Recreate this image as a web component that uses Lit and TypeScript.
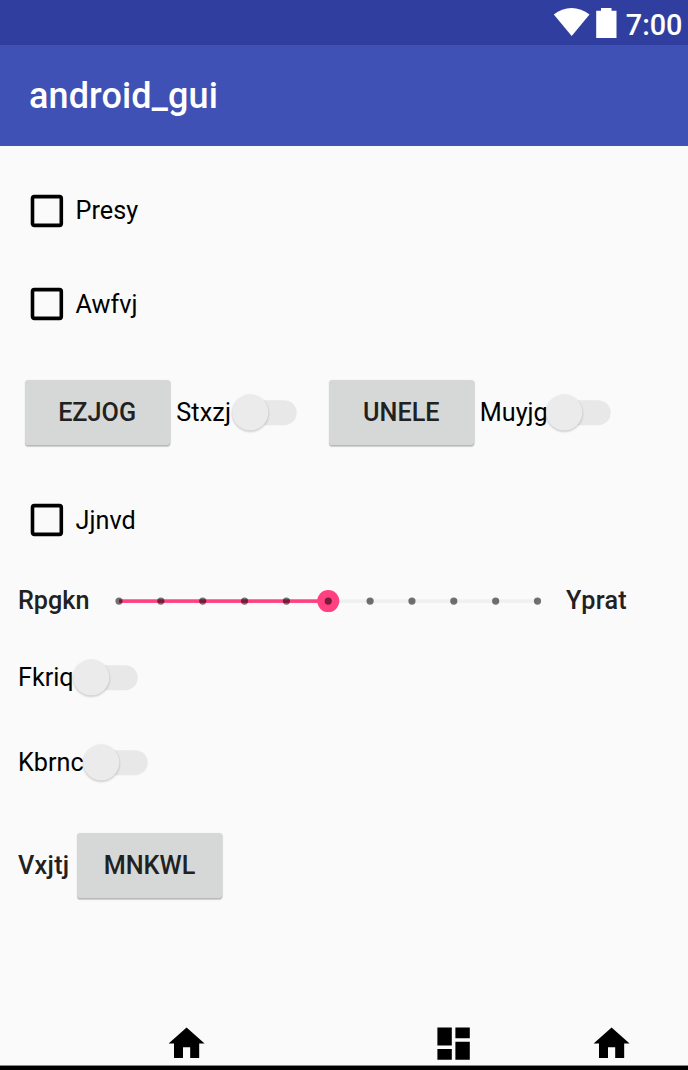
import { LitElement, html, css, svg } from "lit";
import { customElement, property } from "lit/decorators.js";

const HOME = "M10 20v-6h4v6h5v-8h3L12 3 2 12h3v8z";
const DASHBOARD =
  "M3 13h8V3H3v10zm0 8h8v-6H3v6zm10 0h8V11h-8v10zm0-18v6h8V3h-8z";

@customElement("check-row")
class CheckRow extends LitElement {
  @property() label = "";
  static styles = css`
    :host { display: flex; align-items: center; padding-left: 30px; }
    svg { display: block; flex: none; margin-right: 11.6px; }
    .text { color: #000; padding-top: 1px; }
  `;
  render() {
    return html`<svg width="34" height="34" viewBox="0 0 34 34">
        <rect x="2.5" y="2.6" width="28.8" height="28.8" rx="1.8" fill="none" stroke="#000" stroke-width="3.6"></rect>
      </svg>
      <span class="text">${this.label}</span>`;
  }
}

@customElement("toggle-switch")
class ToggleSwitch extends LitElement {
  @property() label = "";
  static styles = css`
    :host { display: flex; align-items: center; color: #000; }
    .text { flex: 1; min-width: 0; white-space: nowrap; }
    svg { display: block; flex: none; overflow: visible; }
    .thumb { filter: drop-shadow(0 1.6px 1px rgba(0, 0, 0, 0.24)); }
  `;
  render() {
    return html`<span class="text">${this.label}</span>
      <svg width="65" height="38" viewBox="0 0 65 38">
        <rect x="18" y="6.2" width="46.7" height="25" rx="12.5" fill="#e8e8e8"></rect>
        <circle class="thumb" cx="18.3" cy="18.6" r="18" fill="#ebebeb"></circle>
      </svg>`;
  }
}

@customElement("step-slider")
class StepSlider extends LitElement {
  @property({ type: Number }) value = 5;
  static styles = css`
    :host { display: block; }
    svg { display: block; }
  `;
  render() {
    const step = 41.85;
    const x = (i: number) => 12 + i * step;
    return html`<svg width="443" height="24" viewBox="0 0 443 24">
      <rect x="12" y="10.3" width="418.5" height="3.6" fill="#f0f0f0"></rect>
      <rect x="12" y="10.3" width=${this.value * step} height="3.6" fill="#ff4081"></rect>
      <circle cx=${x(this.value)} cy="12.1" r="11" fill="#ff4081"></circle>
      ${Array.from({ length: 11 }, (_, i) =>
        svg`<circle cx=${x(i)} cy="12.1" r="3.6" fill="#000" fill-opacity="0.55"></circle>`
      )}
    </svg>`;
  }
}

@customElement("app-root")
class AppRoot extends LitElement {
  static styles = css`
    :host {
      display: flex; flex-direction: column; width: 688px; height: 1070px;
      overflow: hidden; background: #fafafa;
      font: 400 25.2px/30px Roboto, sans-serif; color: #212121;
    }
    .status {
      flex: none; height: 45px; background: #303f9f; color: #fff;
      display: flex; align-items: center; justify-content: flex-end;
      box-sizing: border-box; padding: 5px 5.5px 0 0;
      font-size: 28.8px; font-weight: 500;
    }
    .status svg { display: block; height: 45px; width: 72.5px; margin-top: -5px; }
    .bar {
      flex: none; height: 101px; background: #3f51b5; color: #fff;
      display: flex; align-items: center; box-sizing: border-box;
      padding-left: 29px; font-size: 36px; font-weight: 500;
      letter-spacing: 0.12px;
    }
    .content { flex: 1; padding-top: 18px; display: flex; flex-direction: column; }
    .h93 { height: 93px; }
    .h94 { height: 94px; }
    .row { display: flex; align-items: center; flex: none; }
    .actions { box-sizing: border-box; height: 122px; padding: 1px 0 0 24.6px; }
    .slider { height: 68px; padding-left: 18px; }
    .fifth { height: 86px; padding-left: 18px; }
    .sixth { height: 83px; padding-left: 18px; }
    .last { height: 123px; padding-left: 18px; }
    .button {
      box-sizing: border-box; width: 145px; height: 65px; flex: none;
      display: flex; align-items: center; justify-content: center;
      border-radius: 3.6px; background: #d6d8d7;
      box-shadow: 0 1.5px 1px rgba(0, 0, 0, 0.17), 0.5px 0.5px 1px rgba(0, 0, 0, 0.12);
    }
    .strong { font-weight: 500; }
    .stxzj { width: 121px; margin: 0 31.6px 0 6.6px; letter-spacing: 0.15px; }
    .muyjg { width: 131px; margin-left: 6px; }
    .fkriq { width: 119.8px; }
    .kbrnc { width: 130.4px; }
    .min { width: 88.5px; }
    .max { margin-left: 16.5px; letter-spacing: 0.3px; }
    .prefix { width: 59px; letter-spacing: 0.3px; }
    .nav {
      flex: none; height: 48px; display: flex; padding: 0.4px 0 0 165.3px;
      border-bottom: 4px solid #000; box-sizing: border-box;
      background: linear-gradient(#888, #888) left bottom / 100% 1px no-repeat;
      background-origin: padding-box;
    }
    .icon { width: 43.2px; height: 43.2px; flex: none; fill: #000; }
    .icon.dash { margin-left: 223.1px; }
    .icon.end { margin-left: 115.2px; }
  `;

  private icon(path: string, name = "") {
    return html`<svg class="icon ${name}" viewBox="0 0 24 24"><path d=${path}></path></svg>`;
  }

  render() {
    return html`
      <div class="status">
        <svg viewBox="0 0 72.5 45" fill="#fff">
          <path d="M0.8 14.5C11 5.8 26 5.8 36.5 14.5L18.7 36z"></path>
          <path d="M43.2 10.8H48V8H58.5V10.8H63.5V38H43.2z"></path>
        </svg>
        <span>7:00</span>
      </div>
      <div class="bar">android_gui</div>
      <div class="content">
        <check-row class="h93" label="Presy"></check-row>
        <check-row class="h94" label="Awfvj"></check-row>
        <div class="row actions">
          <div class="button strong">EZJOG</div>
          <toggle-switch class="stxzj" label="Stxzj"></toggle-switch>
          <div class="button strong">UNELE</div>
          <toggle-switch class="muyjg" label="Muyjg"></toggle-switch>
        </div>
        <check-row class="h94" label="Jjnvd"></check-row>
        <div class="row slider">
          <span class="strong min">Rpgkn</span>
          <step-slider value="5"></step-slider>
          <span class="strong max">Yprat</span>
        </div>
        <div class="row fifth"><toggle-switch class="fkriq" label="Fkriq"></toggle-switch></div>
        <div class="row sixth"><toggle-switch class="kbrnc" label="Kbrnc"></toggle-switch></div>
        <div class="row last">
          <span class="strong prefix">Vxjtj</span>
          <div class="button strong">MNKWL</div>
        </div>
      </div>
      <div class="nav">
        ${this.icon(HOME)} ${this.icon(DASHBOARD, "dash")} ${this.icon(HOME, "end")}
      </div>
    `;
  }
}
